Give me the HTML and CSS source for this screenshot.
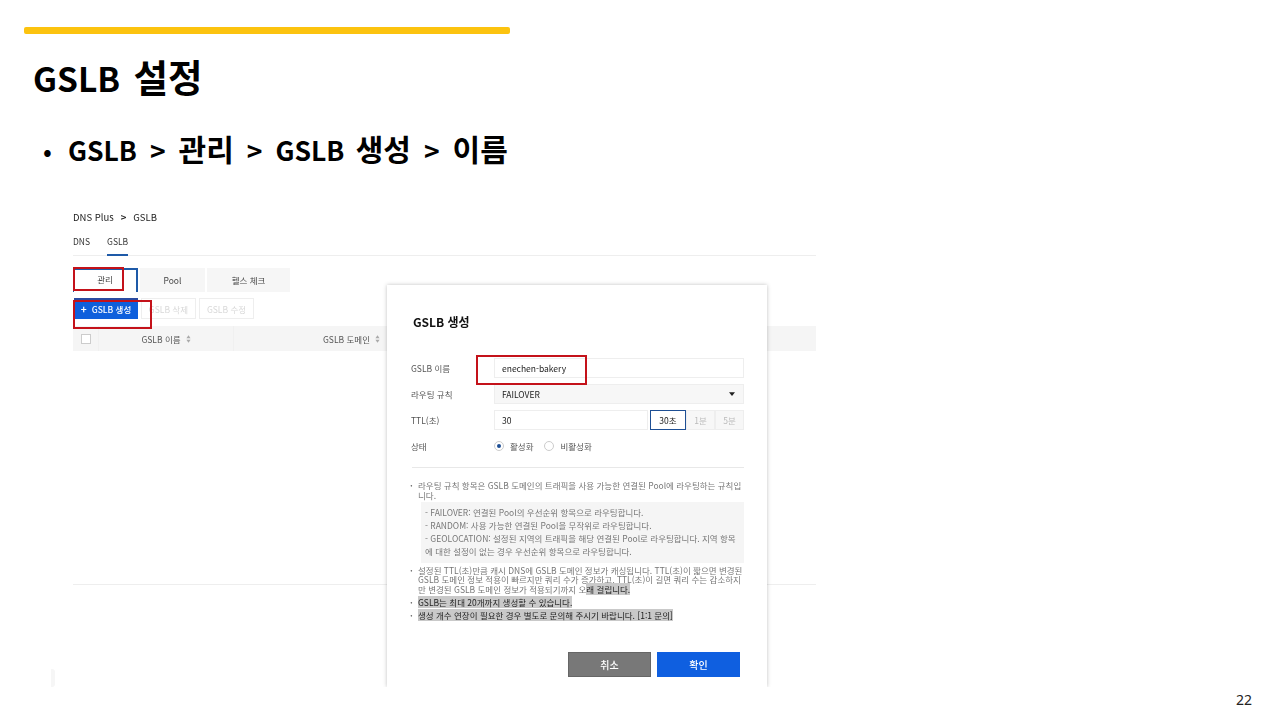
FILE: index.html
```html
<!DOCTYPE html>
<html lang="ko">
<head>
<meta charset="utf-8">
<title>GSLB 설정</title>
<link rel="stylesheet" href="styles.css">
</head>
<body>
<main class="slide">
  <div class="accent"></div>
  <h1 class="title"><span class="lat">GSLB</span> 설정</h1>
  <p class="path"><span class="dot">•</span><span class="lat">GSLB</span><span class="lat">&gt;</span><span>관리</span><span class="lat">&gt;</span><span class="words"><span class="lat">GSLB</span> 생성</span><span class="lat">&gt;</span><span>이름</span></p>

  <section class="shot">
    <div class="crumb"><span>DNS Plus</span><span class="sep">&gt;</span><span>GSLB</span></div>
    <nav class="nav"><span class="nav-item">DNS</span><span class="nav-item active">GSLB</span></nav>
    <div class="tabs">
      <span class="tab current">관리</span>
      <span class="tab pool">Pool</span>
      <span class="tab health">헬스 체크</span>
    </div>
    <div class="actions">
      <span class="btn primary"><b class="plus">+</b>GSLB 생성</span>
      <span class="btn off del">GSLB 삭제</span>
      <span class="btn off">GSLB 수정</span>
    </div>
    <div class="thead">
      <span class="cell check"><i class="box"></i></span>
      <span class="cell name">GSLB 이름 <svg class="sort" viewBox="0 0 6 9" width="5" height="8"><path d="M3 0l2.5 3.5h-5zM3 9L.5 5.500h5z" fill="#aaa"/></svg></span>
      <span class="cell domain">GSLB 도메인 <svg class="sort" viewBox="0 0 6 9" width="5" height="8"><path d="M3 0l2.5 3.5h-5zM3 9L.5 5.500h5z" fill="#aaa"/></svg></span>
    </div>
    <div class="tfoot-line"></div>

    <div class="mark mark-tab"></div>
    <div class="mark mark-btn"></div>

    <div class="modal">
      <h2 class="modal-title">GSLB 생성</h2>
      <div class="form">
        <label class="lbl">GSLB 이름</label>
        <div class="field">enechen-bakery</div>
        <label class="lbl">라우팅 규칙</label>
        <div class="field select">FAILOVER<svg class="caret" viewBox="0 0 8 5" width="6" height="4"><path d="M0 0h8L4 5z" fill="#222"/></svg></div>
        <label class="lbl">TTL(초)</label>
        <div class="ttl">
          <div class="field grow">30</div>
          <span class="seg on">30초</span><span class="seg">1분</span><span class="seg">5분</span>
        </div>
        <label class="lbl">상태</label>
        <div class="radios">
          <span class="radio sel"></span><span class="rtext">활성화</span>
          <span class="radio"></span><span class="rtext">비활성화</span>
        </div>
      </div>
      <hr class="rule">
      <ul class="notes">
        <li>라우팅 규칙 항목은 GSLB 도메인의 트래픽을 사용 가능한 연결된 Pool에 라우팅하는 규칙입<br>니다.</li>
        <li class="plain">
          <div class="info">
            - FAILOVER: 연결된 Pool의 우선순위 항목으로 라우팅합니다.<br>
            - RANDOM: 사용 가능한 연결된 Pool을 무작위로 라우팅합니다.<br>
            - GEOLOCATION: 설정된 지역의 트래픽을 해당 연결된 Pool로 라우팅합니다. 지역 항목<br>
            에 대한 설정이 없는 경우 우선순위 항목으로 라우팅합니다.
          </div>
        </li>
        <li>설정된 TTL(초)만큼 캐시 DNS에 GSLB 도메인 정보가 캐싱됩니다. TTL(초)이 짧으면 변경된<br>GSLB 도메인 정보 적용이 빠르지만 쿼리 수가 증가하고, TTL(초)이 길면 쿼리 수는 감소하지<br>만 변경된 GSLB 도메인 정보가 적용되기까지 오<mark class="hl">래 걸립니다.</mark></li>
        <li class="gap"><mark class="hl">GSLB는 최대 20개까지 생성할 수 있습니다.</mark></li>
        <li class="gap"><mark class="hl">생성 개수 연장이 필요한 경우 별도로 문의해 주시기 바랍니다. [1:1 문의]</mark></li>
      </ul>
      <div class="foot">
        <span class="mbtn cancel">취소</span>
        <span class="mbtn ok">확인</span>
      </div>
      <div class="mark mark-name"></div>
    </div>
    <div class="scrap"></div>
  </section>

  <footer class="page">22</footer>
</main>
</body>
</html>
```
FILE: styles.css
```css
* { box-sizing: border-box; }
html, body { margin: 0; padding: 0; background: #fff; }
body { font-family: "Noto Sans CJK KR", "Noto Sans", sans-serif; color: #000; }

.slide { width: 1280px; height: 720px; overflow: hidden; display: flex; flex-direction: column; position: relative; }

.accent { width: 486px; height: 7px; margin: 27px 0 0 24px; background: #fcc30f; border-radius: 2px; }
.title { margin: 14px 0 0 33px; font-size: 37.5px; line-height: 56px; height: 56px; font-weight: 700; word-spacing: 3px; }
.title .lat { font-size: 33.5px; }
.path { margin: 21px 0 0 43px; display: flex; align-items: baseline; gap: 13px; font-size: 30px; line-height: 46px; height: 46px; font-weight: 700; white-space: nowrap; }
.path .lat { font-size: 26.5px; }
.path .dot { width: 12px; font-weight: 400; font-size: 26px; }
.path .words { word-spacing: 3px; }

.shot { position: relative; width: 743px; height: 484px; margin: 36px 0 0 73px; font-size: 8.5px; color: #333; flex: none; filter: blur(.3px); }

.crumb { display: flex; gap: 7px; font-size: 9.5px; line-height: 14px; margin-top: 3px; color: #222; }
.crumb .sep { font-weight: 700; }
.nav { display: flex; gap: 17px; margin-top: 7px; height: 25px; border-bottom: 1px solid #eee; font-size: 8.5px; }
.nav-item { padding-top: 3px; height: 25px; line-height: 14px; }
.nav-item.active { border-bottom: 2px solid #1e5aa8; }

.tabs { display: flex; gap: 2px; margin-top: 12px; height: 24px; }
.tab { display: flex; align-items: center; justify-content: center; background: #f6f6f6; color: #444; }
.tab.current { width: 65px; background: #fff; border: 2px solid #1e5aa8; border-bottom: 0; border-left: 1px solid #1e5aa8; padding-bottom: 4px; }
.tab.pool { width: 65px; }
.tab.health { width: 83px; }

.actions { display: flex; gap: 3px; margin-top: 6px; margin-left: 1px; height: 21px; }
.btn { display: flex; align-items: center; justify-content: center; width: 55px; border: 1px solid #eee; color: #d8d8d8; }
.btn.primary { width: 64px; background: #0f5fdc; border: 0; border-top: 2px solid #2a4aa0; padding-bottom: 2px; color: #fff; font-weight: 500; }
.btn.del { justify-content: flex-end; padding-right: 7px; }
.plus { margin-right: 5px; font-size: 10px; }

.thead { display: flex; margin-top: 7px; height: 25px; background: #f5f5f5; align-items: stretch; }
.cell { display: flex; align-items: center; justify-content: center; border-right: 1px solid #f0f0f0; color: #555; gap: 5px; }
.check { width: 26px; }
.box { width: 10px; height: 10px; border: 1px solid #ccc; background: #fff; }
.name { width: 135px; }
.domain { width: 235px; border-right: 0; }

.tfoot-line { margin-top: 233px; height: 1px; background: #eee; }

.mark { position: absolute; border: 2px solid #c4121a; pointer-events: none; }
.mark-tab { left: 0; top: 60px; width: 51px; height: 24px; }
.mark-btn { left: 0; top: 93px; width: 79px; height: 29px; }
.mark-name { left: 89px; top: 70px; width: 111px; height: 30px; }

.scrap { position: absolute; left: -22px; top: 462px; width: 4px; height: 18px; background: #f6f6f6; border-radius: 0 3px 3px 0; }

.modal { position: absolute; left: 314px; top: 78px; width: 380px; height: 402px; background: #fff; box-shadow: 0 0 4px rgba(0,0,0,.25); clip-path: inset(-8px -8px 0 -8px); padding: 0 23px 0 25px; color: #444; }
.modal-title { margin: 28px 0 0 1px; font-size: 12px; line-height: 18px; font-weight: 700; color: #111; }

.form { display: grid; grid-template-columns: 82px 1fr; grid-auto-rows: 20px; row-gap: 6px; margin-top: 27px; align-items: center; }
.lbl { font-size: 8.5px; line-height: 14px; color: #555; margin-left: -1px; }
.field { height: 20px; border: 1px solid #eee; padding-left: 7px; display: flex; align-items: center; font-size: 8.5px; color: #222; background: #fff; }
.select { background: #f7f7f7; justify-content: space-between; padding-right: 8px; }
.ttl { display: flex; height: 20px; }
.grow { flex: 1; }
.seg { width: 29px; display: flex; align-items: center; justify-content: center; background: #f7f7f7; border: 1px solid #eee; color: #bbb; }
.seg.on { width: 36px; margin-left: 2px; background: #fff; border: 1.5px solid #1e4f94; color: #222; }
.radios { display: flex; align-items: center; }
.radio { width: 10px; height: 10px; border-radius: 50%; border: 1px solid #ccc; background: #fff; display: flex; align-items: center; justify-content: center; flex: none; }
.radio.sel::after { content: ""; width: 4px; height: 4px; border-radius: 50%; background: #1e4f94; }
.rtext { margin: 0 11px 0 6px; color: #555; }

.rule { margin: 11px 0 0; border: 0; height: 1px; background: #e8e8e8; }

.notes { list-style: none; margin: 13px 0 0; padding: 0; font-size: 8.5px; line-height: 9.5px; color: #777; white-space: nowrap; }
.notes li { position: relative; padding-left: 6px; }
.notes li::before { content: "·"; position: absolute; left: -2px; top: 0; font-weight: 700; color: #666; }
.notes li.plain { padding: 2px 0 0 9px; }
.notes li.plain::before { content: none; }
.info { background: #f5f5f5; padding: 4px 0 5px 4px; line-height: 13px; height: 61px; color: #777; margin-bottom: 2.5px; }
.notes li.gap { margin-top: 3.5px; }
.hl { background: #c9c9c9; color: #222; }

.foot { display: flex; justify-content: flex-end; gap: 6px; position: absolute; right: 27px; top: 367px; }
.mbtn { width: 83px; height: 25px; display: flex; align-items: center; justify-content: center; color: #fff; font-size: 10px; font-weight: 500; }
.cancel { background: #787878; border: 1px solid #666; }
.ok { background: #0f5fe0; }

.page { margin: auto 28px 12px 0; text-align: right; font-size: 14px; line-height: 16px; color: #222; font-family: "Noto Sans", sans-serif; }
```
